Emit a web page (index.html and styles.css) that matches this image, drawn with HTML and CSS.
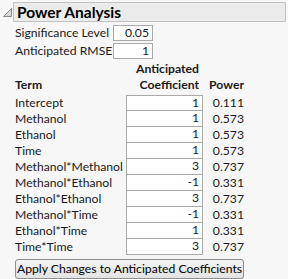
FILE: index.html
```html
<!DOCTYPE html>
<html>
<head>
<meta charset="utf-8">
<link rel="stylesheet" href="styles.css">
</head>
<body>
<div class="panel">
  <div class="outline">
    <svg class="tri" width="9" height="9" viewBox="0 0 9 9"><path d="M8.5 0.5 L8.5 8.5 L0.5 8.5 Z" fill="#d8d8d8" stroke="#8a8a8a" stroke-width="1"/></svg>
    <div class="title">Power Analysis</div>
  </div>
  <div class="content">
    <div class="params">
      <div class="plabel">Significance Level</div>
      <div class="pbox">0.05</div>
      <div class="plabel">Anticipated RMSE</div>
      <div class="pbox">1</div>
    </div>
    <div class="grid">
      <div class="h h-term">Term</div>
      <div class="h h-coef">Anticipated<br>Coefficient</div>
      <div class="h h-pow">Power</div>

      <div class="term">Intercept</div><div class="coef first">1</div><div class="pow">0.111</div>
      <div class="term">Methanol</div><div class="coef">1</div><div class="pow">0.573</div>
      <div class="term">Ethanol</div><div class="coef">1</div><div class="pow">0.573</div>
      <div class="term">Time</div><div class="coef">1</div><div class="pow">0.573</div>
      <div class="term">Methanol*Methanol</div><div class="coef">3</div><div class="pow">0.737</div>
      <div class="term">Methanol*Ethanol</div><div class="coef">-1</div><div class="pow">0.331</div>
      <div class="term">Ethanol*Ethanol</div><div class="coef">3</div><div class="pow">0.737</div>
      <div class="term">Methanol*Time</div><div class="coef">-1</div><div class="pow">0.331</div>
      <div class="term">Ethanol*Time</div><div class="coef">1</div><div class="pow">0.331</div>
      <div class="term">Time*Time</div><div class="coef">3</div><div class="pow">0.737</div>
    </div>
    <button class="btn">Apply Changes to Anticipated Coefficients</button>
  </div>
</div>
</body>
</html>
```
FILE: styles.css
```css
html, body {
  margin: 0;
  padding: 0;
  background: #f7f7f7;
}
body {
  font-family: Lato, "Noto Sans", sans-serif;
  font-size: 12.2px;
  color: #1a1a1a;
  width: 288px;
  height: 279px;
  overflow: hidden;
}
.panel {
  padding-top: 2px;
}
.outline {
  display: flex;
  align-items: center;
  height: 20px;
}
.tri {
  margin-left: 3px;
  margin-right: 1px;
  flex: none;
}
.title {
  box-sizing: border-box;
  height: 20px;
  width: 273px;
  background: #ebebeb;
  border: 1px solid #c2c2c2;
  font-weight: bold;
  font-size: 15.5px;
  line-height: 18px;
  padding-left: 3px;
  color: #000;
  white-space: nowrap;
}
.content {
  padding-left: 15px;
}
.params {
  display: grid;
  grid-template-columns: 98px 40px;
  row-gap: 2px;
  margin-top: 3px;
  align-items: center;
}
.plabel {
  line-height: 16px;
  white-space: nowrap;
}
.pbox {
  box-sizing: border-box;
  height: 16px;
  background: #fff;
  border: 1px solid #a9a9a9;
  text-align: right;
  line-height: 14px;
  padding-right: 3px;
}
.grid {
  display: grid;
  grid-template-columns: 111px 77px 41px;
  margin-top: 2px;
}
.h {
  font-weight: bold;
  line-height: 16px;
  align-self: end;
  padding-bottom: 2px;
  white-space: nowrap;
}
.h-coef {
  text-align: right;
  padding-right: 4px;
}
.h-pow {
  text-align: right;
}
.term, .pow {
  line-height: 16px;
  height: 16px;
  white-space: nowrap;
}
.pow {
  text-align: right;
}
.coef {
  box-sizing: border-box;
  height: 16px;
  line-height: 14px;
  background: #fff;
  border: 1px solid #a9a9a9;
  border-top: none;
  text-align: right;
  padding-right: 3px;
}
.coef.first {
  border-top: 1px solid #a9a9a9;
}
.btn {
  display: block;
  margin-top: 4px;
  box-sizing: border-box;
  width: 229px;
  height: 20px;
  font-family: inherit;
  font-size: 12.2px;
  line-height: 18px;
  white-space: nowrap;
  color: #000;
  padding: 0;
  border: 1px solid #8e8e8e;
  border-radius: 3px;
  background: linear-gradient(#f4f4f4, #e2e2e2);
}
```
